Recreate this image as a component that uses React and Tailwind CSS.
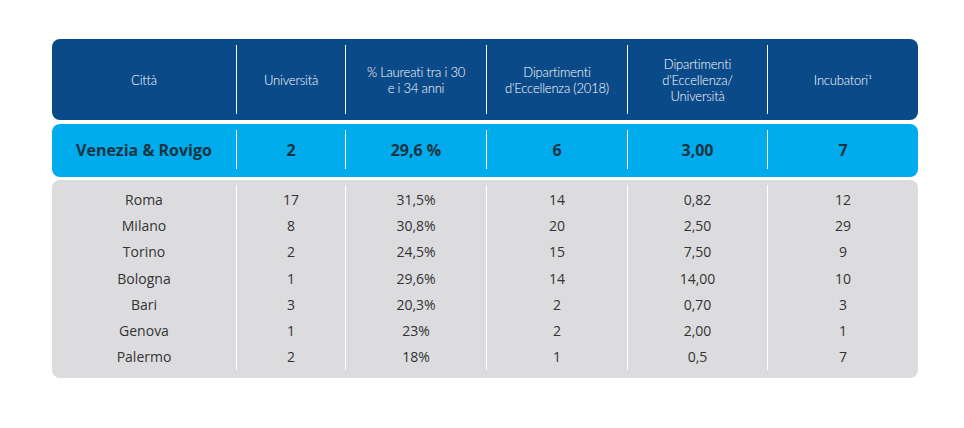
import React from 'react';

const cols = 'grid grid-cols-[184px_109px_141px_141px_140px_151px]';

const headers = [
  ['Città'],
  ['Università'],
  ['% Laureati tra i 30', 'e i 34 anni'],
  ['Dipartimenti', "d'Eccellenza (2018)"],
  ['Dipartimenti', "d'Eccellenza/", 'Università'],
  ['Incubatori¹'],
];

const highlight = ['Venezia & Rovigo', '2', '29,6 %', '6', '3,00', '7'];

const rows = [
  ['Roma', '17', '31,5%', '14', '0,82', '12'],
  ['Milano', '8', '30,8%', '20', '2,50', '29'],
  ['Torino', '2', '24,5%', '15', '7,50', '9'],
  ['Bologna', '1', '29,6%', '14', '14,00', '10'],
  ['Bari', '3', '20,3%', '2', '0,70', '3'],
  ['Genova', '1', '23%', '2', '2,00', '1'],
  ['Palermo', '2', '18%', '1', '0,5', '7'],
];

export default function App() {
  return (
    <div className="w-[964px] h-[428px] bg-white pt-[39px] pl-[52px] font-['Lato','Open_Sans',sans-serif]">
      <div className="w-[866px] flex flex-col gap-[4px]">
        {/* Header */}
        <div className={`${cols} bg-[#0b4a89] rounded-[8px] h-[81px] pt-[6px] pb-[6px]`}>
          {headers.map((lines, i) => (
            <div
              key={i}
              className={`flex flex-col items-center justify-center text-center text-white text-[13px] leading-[16px] font-light tracking-[-0.2px] ${i > 0 ? 'border-l border-white' : ''}`}
            >
              {lines.map((l, j) => (
                <span key={j}>{l}</span>
              ))}
            </div>
          ))}
        </div>

        {/* Highlight row */}
        <div className={`${cols} bg-[#00acec] rounded-[8px] h-[53px] pt-[6px] pb-[8px]`}>
          {highlight.map((v, i) => (
            <div
              key={i}
              className={`flex items-center justify-center text-[16px] font-bold text-[#1c3341] font-['Open_Sans',sans-serif] ${i > 0 ? 'border-l border-white' : ''}`}
            >
              {v}
            </div>
          ))}
        </div>

        {/* Body */}
        <div className={`${cols} bg-[#dcdcde] rounded-[8px] h-[198px] pt-[5px] pb-[8px] mt-[-1px]`}>
          {[0, 1, 2, 3, 4, 5].map((c) => (
            <div
              key={c}
              className={`flex flex-col pt-[1px] ${c > 0 ? 'border-l border-white' : ''}`}
            >
              {rows.map((r, j) => (
                <div key={j} className="h-[26.3px] flex items-center justify-center text-[14px] text-[#333] font-['Open_Sans',sans-serif]">
                  {r[c]}
                </div>
              ))}
            </div>
          ))}
        </div>
      </div>
    </div>
  );
}
